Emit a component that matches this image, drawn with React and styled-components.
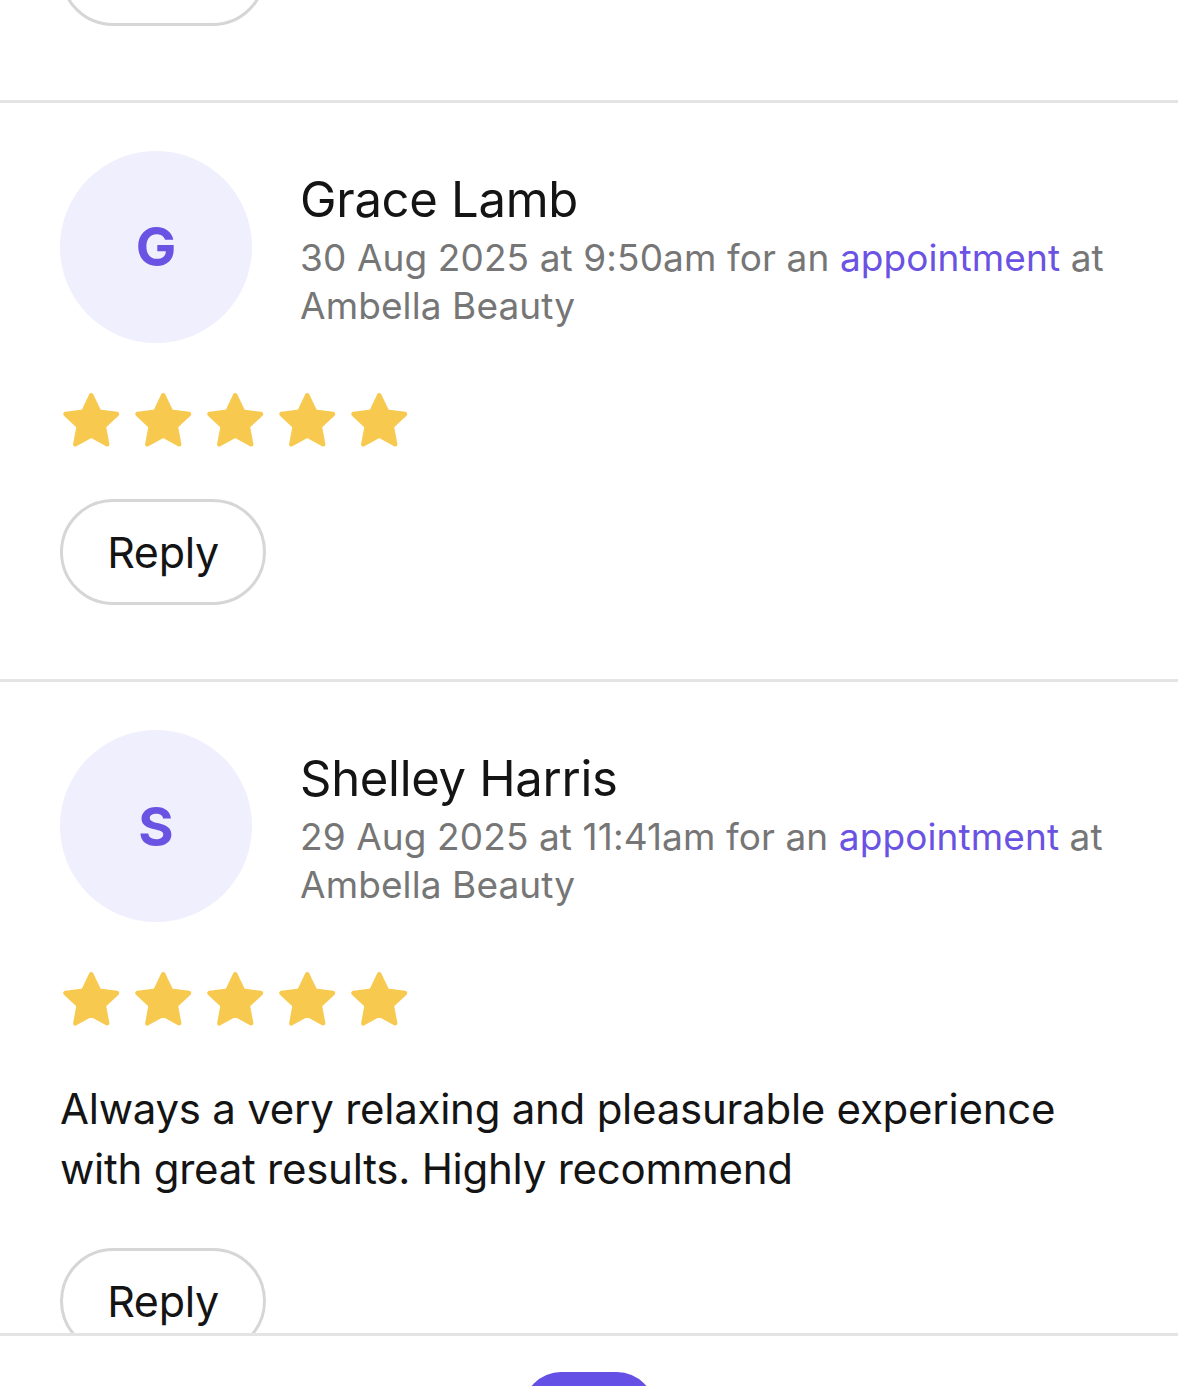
import React, { useLayoutEffect, useRef } from "react";
import styled, { createGlobalStyle } from "styled-components";

const Global = createGlobalStyle`
  html, body { margin: 0; padding: 0; background: #fff; }
  body { font-family: Inter, "Noto Sans", "Liberation Sans", sans-serif; -webkit-font-smoothing: antialiased; }
  * { box-sizing: border-box; }
`;

const Screen = styled.div`
  width: 1178px;
  height: 1386px;
  display: flex;
  flex-direction: column;
  overflow: hidden;
  background: #fff;
`;

const Feed = styled.div`
  flex: 1;
  min-height: 0;
  overflow: hidden;
`;

const Card = styled.article`
  display: flex;
  flex-direction: column;
  padding: 48px 60px 74px;
  border-bottom: 3px solid #e4e4e4;
`;

const Header = styled.div`
  display: flex;
  align-items: flex-start;
  gap: 48px;
`;

const Avatar = styled.div`
  flex: 0 0 auto;
  width: 192px;
  height: 192px;
  border-radius: 50%;
  background: #f0effd;
  color: #6a52e3;
  display: flex;
  align-items: center;
  justify-content: center;
  font-size: 54px;
  font-weight: 700;
`;

const Info = styled.div`
  display: flex;
  flex-direction: column;
  padding-top: 20px;
  min-width: 0;
`;

const Name = styled.div`
  font-size: 49px;
  line-height: 58px;
  color: #141414;
  font-weight: 400;
  letter-spacing: -0.3px;
`;

const Meta = styled.div`
  margin-top: 5px;
  font-size: 37px;
  line-height: 48px;
  color: #767676;
  letter-spacing: 0.1px;
`;

const Link = styled.a`
  color: #6a52e3;
  text-decoration: none;
`;

const Stars = styled.div`
  display: flex;
  gap: 5.5px;
  margin: 45px 0 0 -2px;
`;

const Body = styled.p`
  margin: 45px 0 0;
  font-size: 42px;
  line-height: 60px;
  color: #141414;
  letter-spacing: -0.25px;
`;

const ReplyButton = styled.button`
  align-self: flex-start;
  margin-top: ${(p) => (p.$afterText ? "49px" : "45px")};
  width: 206px;
  height: 106px;
  border: 3px solid #d6d6d6;
  border-radius: 53px;
  background: #fff;
  font-family: inherit;
  font-size: 43px;
  color: #141414;
  letter-spacing: -0.3px;
  padding: 0;
`;

const BottomBar = styled.nav`
  flex: 0 0 53px;
  border-top: 3px solid #e4e4e4;
  display: flex;
  justify-content: center;
  padding-top: 36px;
  overflow: hidden;
  background: #fff;
`;

const Fab = styled.div`
  width: 132px;
  height: 132px;
  border-radius: 38px;
  background: #6550e5;
  flex: 0 0 auto;
`;

const Star = () => (
  <svg width="66.5" height="66.5" viewBox="0 0 24 24">
    <path
      d="M12 2.6l2.85 5.95 6.45.85-4.75 4.5 1.2 6.45L12 17.2l-5.75 3.15 1.2-6.45L2.7 9.4l6.45-.85z"
      fill="#f7c94f"
      stroke="#f7c94f"
      strokeWidth="1.6"
      strokeLinejoin="round"
    />
  </svg>
);

const reviews = [
  { initial: "K", name: "Karen Smith", date: "31 Aug 2025 at 10:15am", text: null },
  { initial: "G", name: "Grace Lamb", date: "30 Aug 2025 at 9:50am", text: null },
  {
    initial: "S",
    name: "Shelley Harris",
    date: "29 Aug 2025 at 11:41am",
    text: "Always a very relaxing and pleasurable experience with great results. Highly recommend",
  },
];

export default function App() {
  const feedRef = useRef(null);
  const anchorRef = useRef(null);

  useLayoutEffect(() => {
    if (feedRef.current && anchorRef.current) {
      feedRef.current.scrollTop = anchorRef.current.offsetTop - feedRef.current.offsetTop - 103;
    }
  }, []);

  return (
    <>
      <Global />
      <Screen>
        <Feed ref={feedRef}>
          {reviews.map((r, i) => (
            <Card key={r.name} ref={i === 1 ? anchorRef : undefined}>
              <Header>
                <Avatar>{r.initial}</Avatar>
                <Info>
                  <Name>{r.name}</Name>
                  <Meta>
                    {r.date} for an <Link href="#">appointment</Link> at Ambella Beauty
                  </Meta>
                </Info>
              </Header>
              <Stars>
                {[0, 1, 2, 3, 4].map((s) => (
                  <Star key={s} />
                ))}
              </Stars>
              {r.text && <Body>{r.text}</Body>}
              <ReplyButton $afterText={!!r.text}>Reply</ReplyButton>
            </Card>
          ))}
        </Feed>
        <BottomBar>
          <Fab />
        </BottomBar>
      </Screen>
    </>
  );
}
